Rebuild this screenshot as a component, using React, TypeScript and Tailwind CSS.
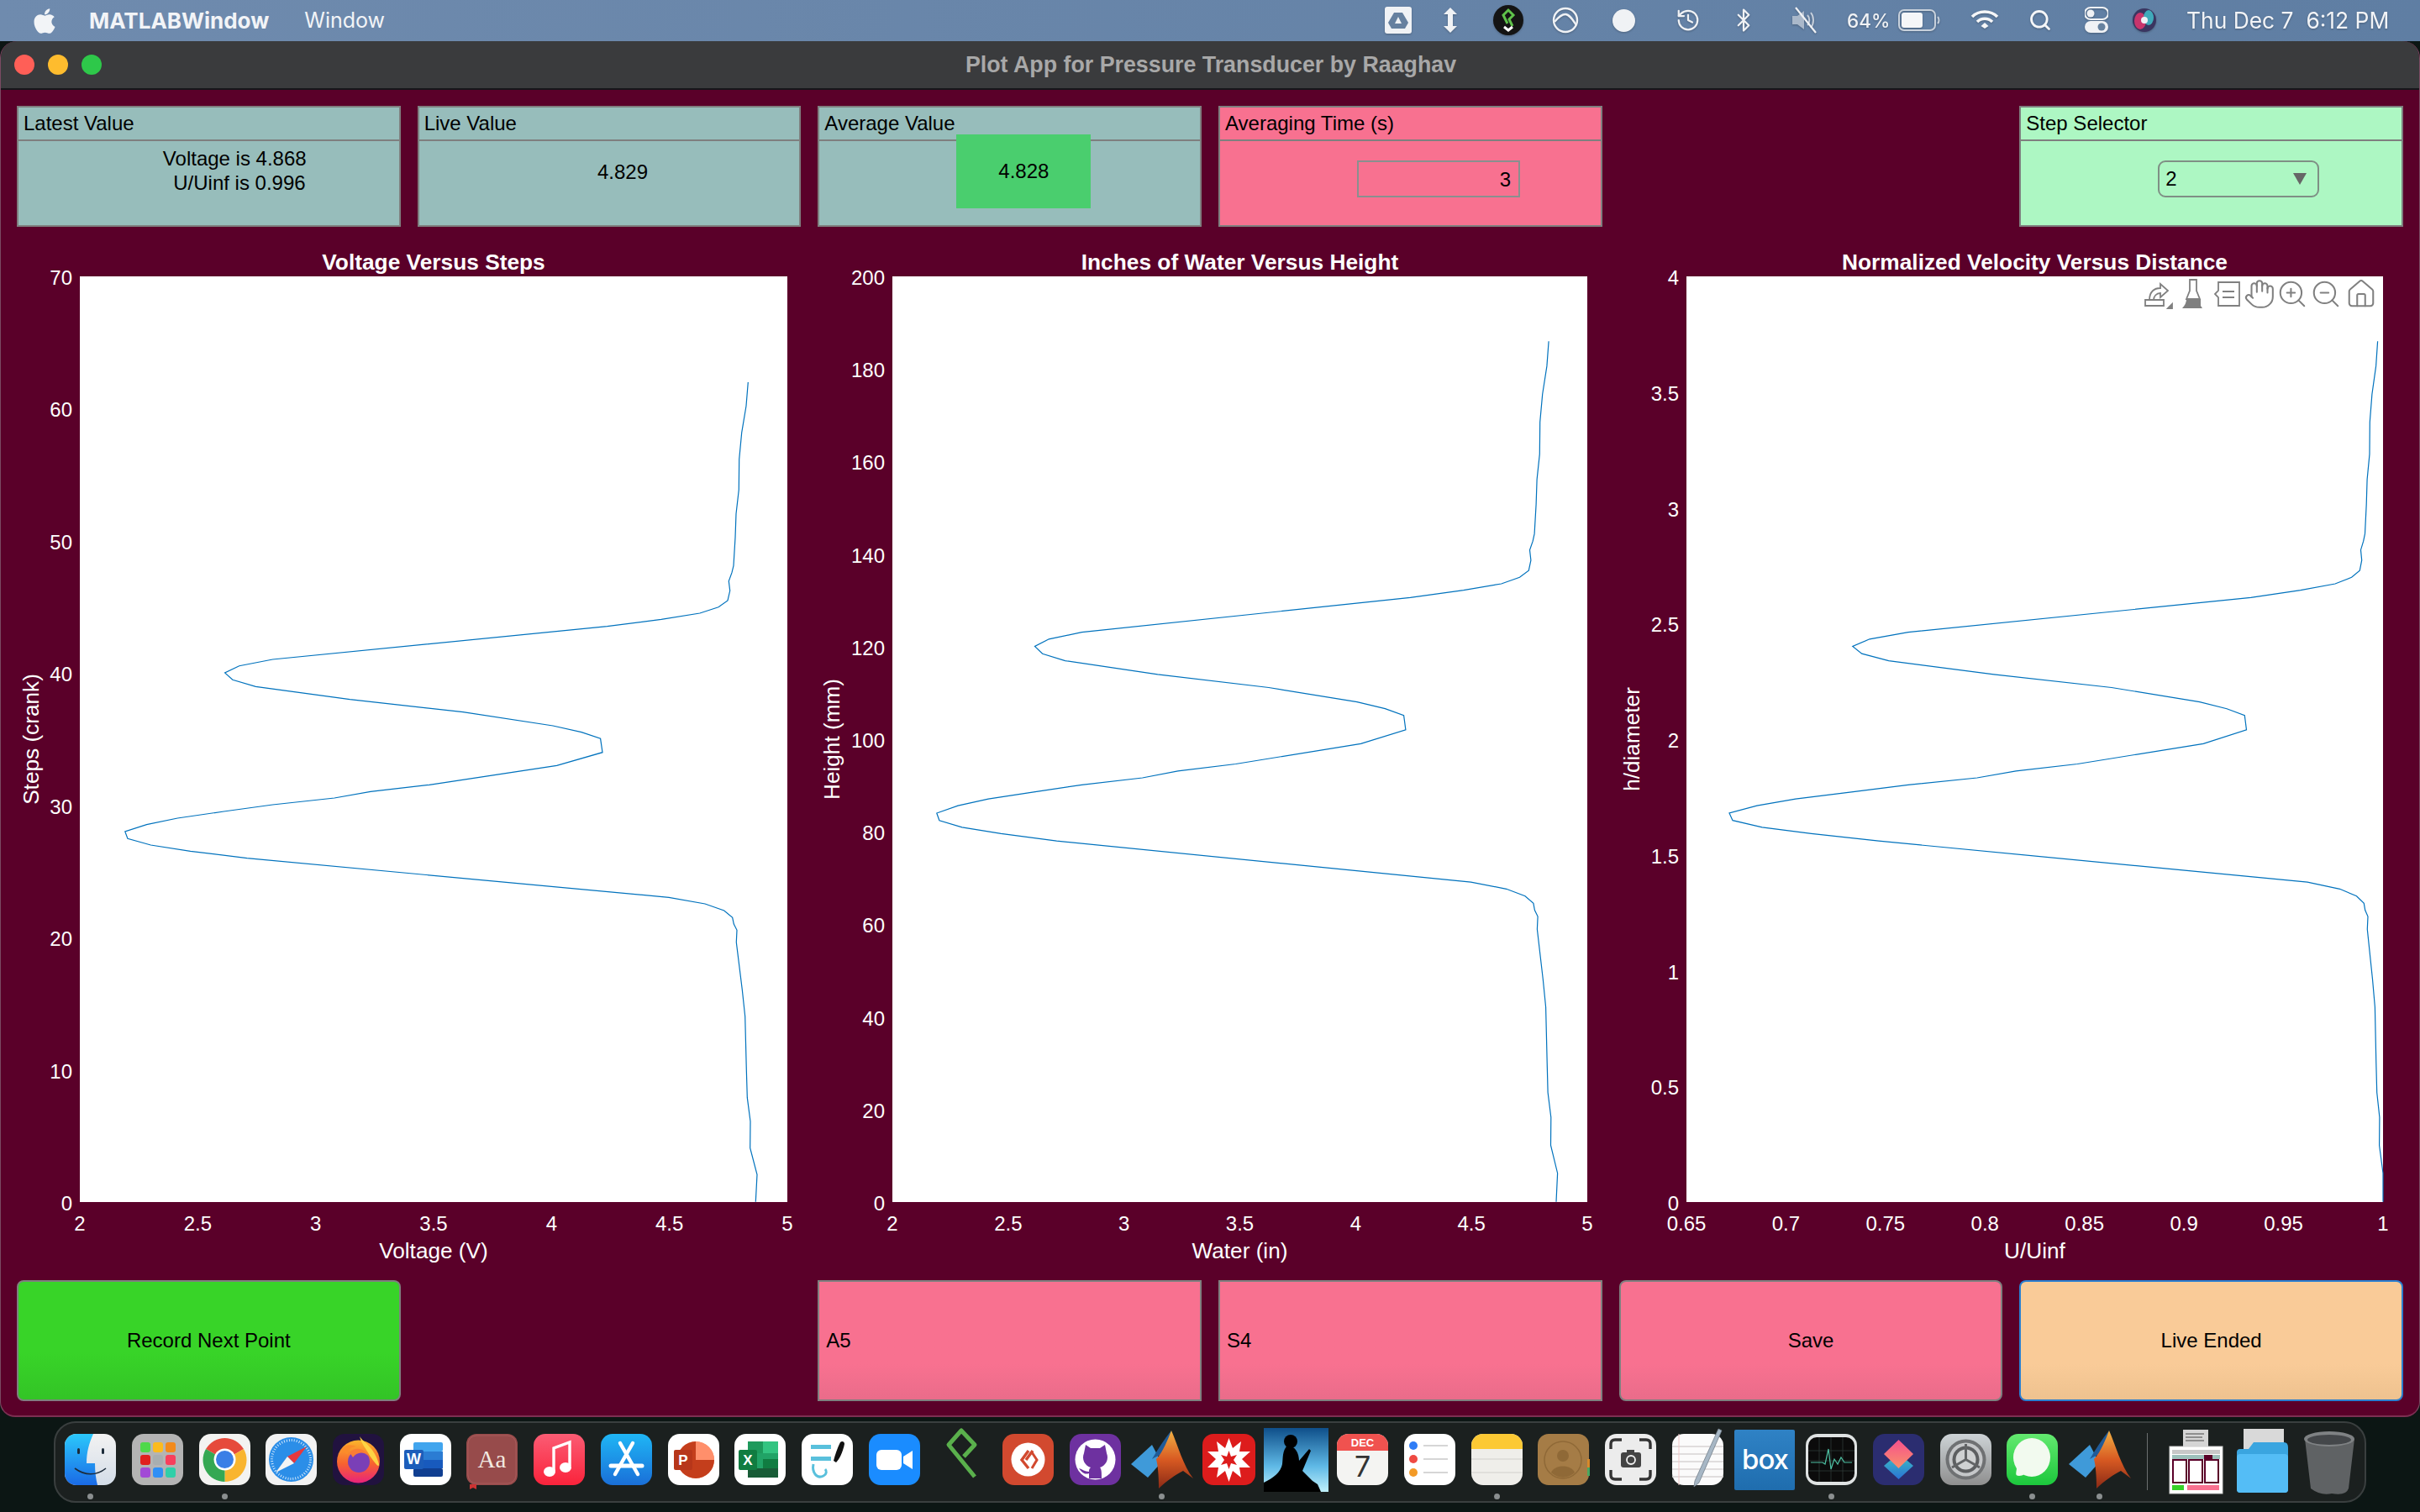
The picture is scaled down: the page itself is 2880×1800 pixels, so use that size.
import React from "react";
import { FaApple } from "react-icons/fa";
import { Hand, ZoomIn, ZoomOut, Home, History, Bluetooth, Search } from "lucide-react";

const raw: number[][] = [
  [890.3,455],[888,483.3],[882.7,515],[879.7,546.7],[879.3,583],[876,611.7],[875,640],[873,673.3],[871,681.7],[867.3,691.7],[868.7,703.3],[866,715],[855,722.7],[832.8,730],[787,737.3],[722.6,745.7],[324.5,785],[284.7,792.7],[267.6,801],[276.8,809.3],[304.3,817.3],[416.4,832.7],[551,847.7],[658,864],[692,871.7],[714.6,879.3],[717,895.7],[662.6,911.3],[511,934.3],[441,942.3],[398,950],[324.5,958],[266.4,966],[211.3,974],[174.5,981.7],[148.8,990],[151.9,998.3],[179.4,1006],[226.6,1013.3],[294,1021.7],[796,1068.3],[839,1076],[861.7,1084],[871.7,1092.3],[873.3,1100],[877,1107.3],[876.3,1121.7],[883.3,1178.3],[886.7,1210],[888.3,1273.3],[889.3,1306.7],[893,1335],[892.7,1366.7],[901,1398.3],[899.3,1430.7],
];
const data = raw.map(([x, y]) => ({ v: 2 + ((x - 95) / 842) * 3, s: (1431 - y) / 15.743 }));

type Frac = (d: { v: number; s: number }) => [number, number];
const PLOT_T = 39;
const PLOT_B = 1141;

function Chart(props: {
  w: number; left: number; right: number; title: string; xlabel: string; ylabel: string; ylabelX: number;
  xt: string[]; yt: string[]; map: Frac; xPos: (i: number) => number; children?: React.ReactNode; className: string;
}) {
  const { w, left, right, map } = props;
  const pw = right - left;
  const ph = PLOT_B - PLOT_T;
  const pts = data.map((d) => { const [fx, fy] = map(d); return `${(left + fx * pw).toFixed(1)},${(PLOT_T + fy * ph).toFixed(1)}`; }).join(" ");
  const cx = (left + right) / 2;
  return (
    <svg width={w} height={1224} className={props.className}>
      <text x={cx} y={31} textAnchor="middle" fontWeight={700} fontSize={26.3} fill="#fff">{props.title}</text>
      <rect x={left} y={PLOT_T} width={pw} height={ph} fill="#fff" />
      <polyline points={pts} fill="none" stroke="#0072bd" strokeWidth={1.2} />
      {props.yt.map((t, i) => (
        <text key={t} x={left - 9} y={PLOT_B - (i / (props.yt.length - 1)) * ph + 10} textAnchor="end" fontSize={24} fill="#fff">{t}</text>
      ))}
      {props.xt.map((t, i) => (
        <text key={t} x={left + props.xPos(i) * pw} y={1175} textAnchor="middle" fontSize={24} fill="#fff">{t}</text>
      ))}
      <text x={cx} y={1208} textAnchor="middle" fontSize={26.2} fill="#fff">{props.xlabel}</text>
      <text transform={`translate(${props.ylabelX},${(PLOT_T + PLOT_B) / 2}) rotate(-90)`} textAnchor="middle" fontSize={26.2} fill="#fff">{props.ylabel}</text>
      {props.children}
    </svg>
  );
}

function Toolbar() {
  const g = "#808080";
  const O = 1911;
  const at = (x: number) => `translate(${x - O},60)`;
  return (
    <g>
      <g transform={at(2568)} fill="none" stroke={g} strokeWidth={1.8}>
        <path d="M-15 7H7V14H-15Z" />
        <path d="M-10 7C-10 -3 -4 -7 3 -7L3 -12L12 -4L3 4L3 -1C-2 -1 -5 3 -5 7" />
        <path d="M12 17L17 12V17Z" fill={g} />
      </g>
      <g transform={at(2610)} fill="none" stroke={g} strokeWidth={1.8}>
        <path d="M-4 -17H4V-4L8 6H-8L-4 -4Z" />
        <path d="M-8 6H9V14L11 17H-13C-10 14 -8 10 -8 6Z" fill={g} stroke="none" />
      </g>
      <g transform={at(2650)} fill="none" stroke={g} strokeWidth={1.8}>
        <path d="M-10 -14H15V14H-10V4L-14 0L-10 -4Z" />
        <path d="M-5 -3H9M-5 4H9" strokeWidth={2} />
      </g>
      <Hand x={2689 - O - 19} y={41} width={38} height={38} stroke={g} strokeWidth={1.3} />
      <ZoomIn x={2728 - O - 19} y={41} width={38} height={38} stroke={g} strokeWidth={1.3} />
      <ZoomOut x={2768 - O - 19} y={41} width={38} height={38} stroke={g} strokeWidth={1.3} />
      <Home x={2810 - O - 19} y={41} width={38} height={38} stroke={g} strokeWidth={1.3} />
    </g>
  );
}

function Panel({ title, className, children }: { title: string; className: string; children?: React.ReactNode }) {
  return (
    <div className={`relative flex h-[144px] flex-col border-2 border-[#7f7f7f] text-[24px] text-black ${className}`}>
      <div className="flex h-[40px] items-center border-b-2 border-[#7f7f7f] pl-[6px]">{title}</div>
      <div className="flex flex-1">{children}</div>
    </div>
  );
}

/* ---------- menu bar icons ---------- */
const Ic = ({ w, children }: { w: string; children: React.ReactNode }) => (
  <div className={`flex shrink-0 items-center justify-center ${w}`}>{children}</div>
);

function StatusIcons() {
  return (
    <div className="flex items-center drop-shadow-[0_1px_1px_rgba(0,0,0,0.25)]">
      <Ic w="w-[33px] mr-[34px]">
        <svg width="32" height="32" viewBox="0 0 32 32"><rect width="32" height="32" rx="3" fill="#f0f2f5" /><path d="M11 7H21L28 19L24 26H8L4 19Z" fill="#66809f" /><path d="M16 12L20 20H12Z" fill="#f0f2f5" /></svg>
      </Ic>
      <Ic w="w-[24px] mr-[38px]">
        <svg width="20" height="32" viewBox="0 0 20 32" fill="#f0f2f5"><path d="M10 1L18 9H13V23H18L10 31L2 23H7V9H2Z" /></svg>
      </Ic>
      <Ic w="w-[38px] mr-[33px]">
        <svg width="36" height="36" viewBox="0 0 36 36"><circle cx="18" cy="18" r="18" fill="#141414" /><path d="M17 22L12 12L18 6L24 12L19 17L23 25" fill="none" stroke="#5fc24a" strokeWidth="3" /><path d="M13 26L18 30L23 26" fill="none" stroke="#fff" strokeWidth="3" /></svg>
      </Ic>
      <Ic w="w-[32px] mr-[39px]">
        <svg width="32" height="32" viewBox="0 0 32 32" fill="none" stroke="#f0f2f5" strokeWidth="2.4"><circle cx="16" cy="16" r="14" /><path d="M3 18C8 12 12 9 16 9C21 9 25 16 29 22" /></svg>
      </Ic>
      <Ic w="w-[28px] mr-[48px]">
        <svg width="27" height="27" viewBox="0 0 27 27"><circle cx="13.5" cy="13.5" r="13.5" fill="#f0f2f5" /></svg>
      </Ic>
      <Ic w="w-[30px] mr-[36px]"><History size={30} color="#f0f2f5" strokeWidth={1.8} /></Ic>
      <Ic w="w-[30px] mr-[41px]"><Bluetooth size={32} color="#f0f2f5" strokeWidth={1.8} /></Ic>
      <Ic w="w-[34px] mr-[33px]">
        <svg width="34" height="34" viewBox="0 0 34 34"><path d="M2 12H8L16 6V28L8 22H2Z" fill="#aab8ca" /><path d="M20 11C23 14 23 20 20 23M24 8C28 13 28 21 24 26" fill="none" stroke="#c4cedb" strokeWidth="2" /><path d="M6 2L30 32" stroke="#f0f2f5" strokeWidth="2.2" /></svg>
      </Ic>
      <span className="w-[58px] font-['Inter',sans-serif] text-[22.5px] font-medium text-[#f0f2f5]">64%</span>
      <Ic w="w-[50px] ml-[3px] mr-[36px]">
        <svg width="50" height="26" viewBox="0 0 50 26"><rect x="1" y="1" width="43" height="24" rx="6" fill="none" stroke="#c8d1dc" strokeWidth="2" /><rect x="4" y="4" width="25" height="18" rx="3" fill="#f5f6f8" /><path d="M47 9C49 11 49 15 47 17" fill="none" stroke="#c8d1dc" strokeWidth="2" /></svg>
      </Ic>
      <Ic w="w-[34px] mr-[35px]">
        <svg width="34" height="28" viewBox="0 0 34 28" fill="none" stroke="#f5f6f8" strokeWidth="3.6"><path d="M2 10C10 2 24 2 32 10" /><path d="M8 16C13 11 21 11 26 16" /><path d="M17 21L21.5 25L17 28L12.5 25Z" fill="#f5f6f8" stroke="none" transform="translate(0,-4)" /></svg>
      </Ic>
      <Ic w="w-[28px] mr-[39px]"><Search size={30} color="#f5f6f8" strokeWidth={2.4} /></Ic>
      <Ic w="w-[28px] mr-[29px]">
        <svg width="28" height="32" viewBox="0 0 28 32"><rect y="1" width="28" height="14" rx="7" fill="none" stroke="#f0f2f5" strokeWidth="2" /><circle cx="7" cy="8" r="4.5" fill="#f0f2f5" /><rect y="17" width="28" height="14" rx="7" fill="#f0f2f5" /><circle cx="20" cy="24" r="4.5" fill="#67829f" /></svg>
      </Ic>
      <Ic w="w-[28px] mr-[36px]">
        <svg width="28" height="28" viewBox="0 0 28 28">
          <circle cx="14" cy="14" r="14" fill="#3a3560" />
          <ellipse cx="9" cy="15" rx="7" ry="10" fill="#d8356e" opacity="0.9" />
          <ellipse cx="19" cy="11" rx="6" ry="9" fill="#41b7c4" opacity="0.9" />
          <circle cx="14" cy="14" r="4" fill="#f0f0f5" />
        </svg>
      </Ic>
      <span className="w-[278px] whitespace-pre font-['Inter',sans-serif] text-[26.4px] text-[#f2f4f7]">Thu Dec 7  6:12 PM</span>
    </div>
  );
}

/* ---------- dock icons ---------- */
const S = ({ children }: { children: React.ReactNode }) => (
  <svg width="61" height="61" viewBox="0 0 61 61" className="overflow-visible">{children}</svg>
);
const R = ({ f }: { f: string }) => <rect width="61" height="61" rx="14" fill={f} />;

const Matlab = ({ id }: { id: string }) => (
  <S>
    <defs><linearGradient id={id} x1="0" y1="0" x2="0" y2="1"><stop offset="0" stopColor="#f2b144" /><stop offset="0.5" stopColor="#d85a22" /><stop offset="1" stopColor="#8a2a16" /></linearGradient></defs>
    <path d="M-6 36L19 13L30 34L14 52Z" fill="#3f9ad9" />
    <path d="M42 -4C34 6 26 18 19 30C26 26 30 24 33 26Z" fill="#205b98" />
    <path d={"M42 -4C50 14 56 38 68 53L56 44C48 48 36 56 27 65C27 50 26 38 24 30C32 22 38 6 42 -4Z"} fill={`url(#${id})`} />
  </S>
);

const dockIcons: { el: React.ReactNode; dot?: boolean }[] = [
  { dot: true, el: <S><defs><linearGradient id="fb" x1="0" y1="0" x2="0" y2="1"><stop offset="0" stopColor="#2bc8fb" /><stop offset="1" stopColor="#1a6ae6" /></linearGradient><linearGradient id="fw" x1="0" y1="0" x2="0" y2="1"><stop offset="0" stopColor="#f2f2f2" /><stop offset="1" stopColor="#d4dde8" /></linearGradient></defs><R f="url(#fw)" /><path d="M14 0H34C29 11 26 22 26 35H36C36 45 37 53 39 61H14A14 14 0 0 1 0 47V14A14 14 0 0 1 14 0Z" fill="url(#fb)" /><rect x="15" y="17" width="3" height="7" rx="1.5" fill="#1c2b3a" /><rect x="44" y="17" width="3" height="7" rx="1.5" fill="#1c2b3a" /><path d="M12 41C24 50 38 50 49 41" fill="none" stroke="#1c2b3a" strokeWidth="1.6" /></S> },
  { el: <S><R f="#b4b4b4" />{["#4fd94b","#fcbb1e","#f28a1c","#e0201f","#a8aeb0","#f83f5c","#a24bd6","#2f8ff5","#2fcfa8"].map((c,i)=><rect key={c} x={10+(i%3)*15} y={10+Math.floor(i/3)*15} width="12" height="12" rx="3" fill={c} />)}</S> },
  { dot: true, el: <S><R f="#f3f3f1" /><path d="M30.5 31L8 18A26 26 0 0 1 53 18Z" fill="#e64a3b" /><path d="M30.5 31L53 18A26 26 0 0 1 30.5 57Z" fill="#f9b52f" /><path d="M30.5 31L30.5 57A26 26 0 0 1 8 18Z" fill="#35a853" /><circle cx="30.5" cy="30.5" r="13" fill="#fff" /><circle cx="30.5" cy="30.5" r="10.5" fill="#3b7fe6" /></S> },
  { el: <S><R f="#f2f2f2" /><circle cx="30.5" cy="30.5" r="26.5" fill="#2b8ee8" /><circle cx="30.5" cy="30.5" r="23" fill="none" stroke="#cfe6fb" strokeWidth="3" strokeDasharray="1 2" /><path d="M49 15L26 27L34 35Z" fill="#e8383d" /><path d="M12 46L26 27L34 35Z" fill="#f4f4f4" /></S> },
  { el: <S><defs><linearGradient id="ff" x1="0" y1="0" x2="0" y2="1"><stop offset="0" stopColor="#fbb52c" /><stop offset="0.55" stopColor="#f8622f" /><stop offset="1" stopColor="#e9227c" /></linearGradient></defs><R f="#21123f" /><circle cx="30.5" cy="33" r="25.5" fill="url(#ff)" /><path d="M32 3C36 10 50 16 55 36C55 42 50 34 44 26C40 18 34 12 32 3Z" fill="#fdd444" /><path d="M10 20C14 12 22 12 28 15C22 15 18 19 18 25Z" fill="#fb8c2a" /><circle cx="31" cy="33" r="13" fill="#7a3fb7" /><path d="M20 22C28 14 38 18 42 26C36 20 28 22 24 28Z" fill="#fa7d34" /></S> },
  { el: <S><R f="#fff" /><rect x="16" y="10" width="35" height="11" rx="2" fill="#41a5ee" /><rect x="16" y="21" width="35" height="10" fill="#2b7cd3" /><rect x="16" y="31" width="35" height="10" fill="#185abd" /><rect x="16" y="41" width="35" height="10" rx="2" fill="#103f91" /><rect x="5" y="19" width="23" height="23" rx="2" fill="#1c5dba" /><text x="16.5" y="36" textAnchor="middle" fontSize="18" fontWeight="700" fill="#fff">W</text></S> },
  { el: <S><rect width="61" height="61" rx="12" fill="#974b4b" /><rect x="2" y="2" width="57" height="57" rx="10" fill="none" stroke="#a85b5b" strokeWidth="1" /><text x="30.5" y="40" textAnchor="middle" fontSize="29" fontFamily="Liberation Serif, serif" fill="#f2e9e0">Aa</text><path d="M4 60H12V66L8 64L4 66Z" fill="#c33" /></S> },
  { el: <S><defs><linearGradient id="mu" x1="0" y1="0" x2="0" y2="1"><stop offset="0" stopColor="#fb5c74" /><stop offset="1" stopColor="#fa233b" /></linearGradient></defs><R f="url(#mu)" /><path d="M24 44V17L43 10V38" fill="none" stroke="#fff" strokeWidth="3.4" /><ellipse cx="19" cy="45" rx="7" ry="6" fill="#fff" /><ellipse cx="38" cy="40" rx="7" ry="6" fill="#fff" /></S> },
  { el: <S><defs><linearGradient id="as" x1="0" y1="0" x2="0" y2="1"><stop offset="0" stopColor="#1fb6f5" /><stop offset="1" stopColor="#1a6fd8" /></linearGradient></defs><R f="url(#as)" /><path d="M23 11L44 48M38 11L17 48" stroke="#fff" strokeWidth="4.4" strokeLinecap="round" /><path d="M12 38H49" stroke="#fff" strokeWidth="5" strokeLinecap="round" /></S> },
  { el: <S><R f="#fff" /><circle cx="33" cy="31" r="22" fill="#ff8f6b" /><path d="M33 31V9A22 22 0 0 0 33 53A22 22 0 0 0 55 31Z" fill="#c43e1c" /><path d="M33 9A22 22 0 0 1 55 31H33Z" fill="#ff8f6b" /><rect x="7" y="19" width="22" height="24" rx="2" fill="#b7361a" /><text x="18" y="37" textAnchor="middle" fontSize="17" fontWeight="700" fill="#fff">P</text></S> },
  { el: <S><R f="#fff" /><rect x="16" y="9" width="36" height="43" rx="2" fill="#21a366" /><rect x="16" y="9" width="18" height="14" fill="#1e9a5c" /><rect x="34" y="9" width="18" height="14" fill="#33c481" /><rect x="34" y="30" width="18" height="11" fill="#107c41" /><rect x="16" y="41" width="36" height="11" fill="#185c37" /><rect x="5" y="19" width="22" height="24" rx="2" fill="#107c41" /><text x="16" y="37" textAnchor="middle" fontSize="17" fontWeight="700" fill="#fff">X</text></S> },
  { el: <S><R f="#fff" /><rect x="11" y="13" width="24" height="5" fill="#59c0dc" /><rect x="11" y="27" width="24" height="5" fill="#59c0dc" /><path d="M46 10C48 8 51 9 51 12C49 22 45 30 41 34L38 32C40 24 43 16 46 10Z" fill="#111" /><path d="M14 36C12 46 18 54 26 50C30 48 30 44 28 42" fill="none" stroke="#59c0dc" strokeWidth="3" /></S> },
  { el: <S><R f="#1a8cff" /><rect x="9" y="19" width="30" height="24" rx="6" fill="#fff" /><path d="M41 27L52 20V42L41 35Z" fill="#fff" /></S> },
  { el: <S><path d="M34 27L47 13L31 -4L16 13L47 51" fill="none" stroke="#5ab04c" strokeWidth="5" strokeLinejoin="round" /></S> },
  { el: <S><R f="#d2492f" /><circle cx="30.5" cy="30.5" r="20" fill="#fff" /><path d="M31 20L23 31L31 41M36 20L28 31" fill="none" stroke="#d2492f" strokeWidth="3.4" /><path d="M35 41L41 31L35 22" fill="none" stroke="#d2492f" strokeWidth="3" /></S> },
  { el: <S><R f="#6e31a0" /><circle cx="30.5" cy="30.5" r="24" fill="#fff" /><path d="M19 13L25 17H36L42 13L44 23C47 30 43 38 36 40C38 42 38 46 38 53H23V47C17 49 14 45 11 41C15 42 18 45 23 45C23 43 23 42 25 40C18 38 14 30 17 23Z" fill="#6e31a0" /></S> },
  { dot: true, el: <Matlab id="ml" /> },
  { el: <S><rect x="-1" width="63" height="61" rx="13" fill="#dd1c1c" /><polygon points="30.5,5 35,17 45,9 43,21 56,21 46,30 56,40 43,40 45,52 35,44 30.5,57 26,44 16,52 18,40 5,40 15,30 5,21 18,21 16,9 26,17" fill="#fff" /><polygon points="30.5,20 33,27 40,25 36,31 40,37 33,35 30.5,42 28,35 21,37 25,31 21,25 28,27" fill="#dd1c1c" /></S> },
  { el: <S><defs><linearGradient id="kd" x1="0" y1="0" x2="0" y2="1"><stop offset="0" stopColor="#0f4f8a" /><stop offset="0.6" stopColor="#5fb9e6" /><stop offset="1" stopColor="#bff0fb" /></linearGradient></defs><rect x="-8" y="-7" width="77" height="76" fill="url(#kd)" /><circle cx="24" cy="9" r="8" fill="#000" /><path d="M20 14C30 14 34 24 34 32L46 18L48 20L38 44L50 56L56 60L60 69H-8V58C4 52 12 46 14 36C15 28 14 20 20 14Z" fill="#000" /></S> },
  { el: <S><R f="#f4f4f2" /><path d="M0 20V14A14 14 0 0 1 14 0H47A14 14 0 0 1 61 14V20Z" fill="#f0524f" /><text x="30.5" y="15" textAnchor="middle" fontSize="13" fontWeight="700" fill="#fff">DEC</text><text x="30.5" y="51" textAnchor="middle" fontSize="34" fontFamily="Inter, sans-serif" fill="#333">7</text></S> },
  { el: <S><R f="#fff" /><circle cx="11" cy="14" r="5" fill="#2f7df6" /><circle cx="11" cy="30" r="5" fill="#ef4a43" /><circle cx="11" cy="46" r="5" fill="#f39a26" /><path d="M23 14H52M23 30H52M23 46H52" stroke="#c9c9c9" strokeWidth="1.6" /></S> },
  { dot: true, el: <S><R f="#efeeea" /><path d="M0 18V14A14 14 0 0 1 14 0H47A14 14 0 0 1 61 14V18Z" fill="#fcc934" /><path d="M0 30H61M0 46H61" stroke="#dbdad6" strokeWidth="1.5" /></S> },
  { el: <S><rect width="61" height="61" rx="13" fill="#a57c46" /><circle cx="30" cy="31" r="22" fill="none" stroke="#8f6937" strokeWidth="1.5" /><circle cx="30" cy="26" r="7" fill="#8f6937" /><path d="M16 46C20 36 40 36 44 46A20 20 0 0 1 16 46Z" fill="#8f6937" /><rect x="59" y="30" width="3" height="10" fill="#d8892a" /><rect x="59" y="40" width="3" height="10" fill="#4aa860" /></S> },
  { el: <S><R f="#ececec" /><path d="M7 18V12Q7 7 12 7H20M41 7H49Q54 7 54 12V18M54 43V49Q54 54 49 54H41M20 54H12Q7 54 7 49V43" fill="none" stroke="#333" strokeWidth="3.4" /><rect x="19" y="22" width="24" height="18" rx="3" fill="#444" /><rect x="26" y="19" width="9" height="5" fill="#444" /><circle cx="31" cy="31" r="5" fill="none" stroke="#f2f2f2" strokeWidth="1.8" /></S> },
  { el: <S><R f="#fbfbfb" /><path d="M0 15H61M0 24H61M0 33H61M0 42H61M0 51H61" stroke="#d8d4d4" strokeWidth="1.5" /><path d="M8 0V61" stroke="#f0c8c8" strokeWidth="1" /><path d="M55 -6L59 -4L32 58L26 63L27 56Z" fill="#a7b7c5" stroke="#74808c" strokeWidth="0.8" /></S> },
  { el: <S><defs><linearGradient id="bx" x1="0" y1="0" x2="0" y2="1"><stop offset="0" stopColor="#2f82c5" /><stop offset="1" stopColor="#1f6dae" /></linearGradient></defs><rect x="-6" y="-5" width="72" height="72" rx="2" fill="url(#bx)" /><text x="30.5" y="42" textAnchor="middle" fontSize="33" fontFamily="Inter, sans-serif" letterSpacing="-1" fontWeight="500" fill="#fff">box</text></S> },
  { dot: true, el: <S><R f="#dfe3e3" /><rect x="3" y="4" width="55" height="53" rx="10" fill="#0b0b0b" /><path d="M3 20H58M3 32H58M3 44H58M16 4V57M30 4V57M44 4V57" stroke="#2d3a37" strokeWidth="0.8" /><path d="M6 34H20L23 36L27 18L30 42L34 30L38 36L42 28L46 34H55" fill="none" stroke="#4ec2a4" strokeWidth="1.2" /></S> },
  { el: <S><defs><linearGradient id="sa" x1="0" y1="0" x2="0" y2="1"><stop offset="0" stopColor="#f7508d" /><stop offset="1" stopColor="#f9906a" /></linearGradient><linearGradient id="sb" x1="0" y1="0" x2="0" y2="1"><stop offset="0" stopColor="#3ec4c0" /><stop offset="1" stopColor="#2a72d6" /></linearGradient></defs><R f="#2b2d70" /><path d="M30.5 23L48 38L30.5 54L13 38Z" fill="url(#sb)" /><path d="M30.5 7L48 24L30.5 41L13 24Z" fill="url(#sa)" /></S> },
  { el: <S><defs><linearGradient id="sp" x1="0" y1="0" x2="0" y2="1"><stop offset="0" stopColor="#cdd3d6" /><stop offset="1" stopColor="#8f8f8f" /></linearGradient></defs><R f="url(#sp)" /><circle cx="30.5" cy="30.5" r="24" fill="#6f7173" /><circle cx="30.5" cy="30.5" r="20" fill="#c5c7c9" /><circle cx="30.5" cy="30.5" r="16" fill="#5d5f61" /><circle cx="30.5" cy="30.5" r="12" fill="#cfd1d2" /><path d="M30.5 30.5V12M30.5 30.5L47 40M30.5 30.5L14 40" stroke="#626466" strokeWidth="3" /></S> },
  { dot: true, el: <S><defs><linearGradient id="ms" x1="0" y1="0" x2="0" y2="1"><stop offset="0" stopColor="#63e96f" /><stop offset="1" stopColor="#1cc73c" /></linearGradient></defs><R f="url(#ms)" /><ellipse cx="30" cy="28" rx="22" ry="23" fill="#f2faef" /><path d="M12 40C12 46 9 50 15 50C20 50 22 47 24 45Z" fill="#f2faef" /></S> },
  { dot: true, el: <Matlab id="ml2" /> },
];

function DockApp({ el, dot }: { el: React.ReactNode; dot?: boolean }) {
  return (
    <div className="flex w-[79.7px] shrink-0 flex-col items-center pt-[13px]">
      {el}
      {dot ? <div className="mt-[10px] h-[7px] w-[7px] rounded-full bg-[#8b8f90]" /> : null}
    </div>
  );
}

function Dock() {
  return (
    <div className="mx-auto mt-[5px] flex h-[97px] w-[2752px] rounded-[26px] border-2 border-[#3a3f3f] bg-[#1b201f] pl-[2px]">
      {dockIcons.map((d, i) => <DockApp key={i} el={d.el} dot={d.dot} />)}
      <div className="flex w-[35px] shrink-0 justify-center pt-[12px]">
        <div className="h-[68px] w-[1px] bg-[#6b6f6f]" />
      </div>
      <DockApp el={<S>
        <rect x="15" y="-5" width="30" height="20" fill="#d5d5d5" />
        <path d="M18 0H40M18 4H38M18 8H40" stroke="#777" strokeWidth="1.5" />
        <rect x="-1" y="15" width="63" height="56" fill="#fff" stroke="#cfcfcf" />
        <rect x="2" y="19" width="57" height="5" fill="#c8c8c8" />
        <rect x="2" y="25" width="57" height="5" fill="#9dc0bb" />
        <rect x="40" y="25" width="10" height="5" fill="#5a0028" />
        <rect x="3" y="31" width="16" height="27" fill="#fff" stroke="#5a0028" strokeWidth="2" />
        <rect x="22" y="31" width="16" height="27" fill="#fff" stroke="#5a0028" strokeWidth="2" />
        <rect x="41" y="31" width="16" height="27" fill="#fff" stroke="#5a0028" strokeWidth="2" />
        <rect x="2" y="61" width="14" height="6" fill="#38d128" />
        <rect x="20" y="61" width="38" height="6" fill="#f87190" />
      </S>} />
      <DockApp el={<S>
        <path d="M8 -6H56V20H8Z" fill="#d9d9d9" />
        <path d="M0 22Q0 18 4 18H14L20 10H56Q61 10 61 16V66Q61 70 57 70H4Q0 70 0 66Z" fill="#3aa5e0" />
        <rect y="24" width="61" height="46" rx="4" fill="#54bdf6" />
      </S>} />
      <DockApp el={<S>
        <path d="M1 6L8 65Q20 74 33 71Q50 74 53 65L60 6Z" fill="#5f6264" />
        <ellipse cx="30" cy="6" rx="30" ry="9" fill="#7f8284" />
        <ellipse cx="30" cy="7" rx="26" ry="6" fill="#44474a" />
      </S>} />
    </div>
  );
}

const xV = ["2", "2.5", "3", "3.5", "4", "4.5", "5"];

export default function App() {
  return (
    <div className="flex h-[1800px] w-[2880px] flex-col overflow-hidden bg-[#0c1614] font-['Liberation_Sans',Arial,sans-serif]">
      <div className="flex h-[49px] shrink-0 items-center bg-gradient-to-r from-[#6f8bae] to-[#5f7ea3]">
        <FaApple className="ml-[36px] text-[#f2f4f7]" size={34} />
        <span className="ml-[36px] font-['Inter',sans-serif] text-[26px] font-bold text-[#f2f4f7]">MATLABWindow</span>
        <span className="ml-[42px] font-['Inter',sans-serif] text-[25px] text-[#f2f4f7]">Window</span>
        <div className="ml-auto"><StatusIcons /></div>
      </div>

      <div className="flex h-[1638px] shrink-0 flex-col overflow-hidden rounded-t-[20px] rounded-b-[18px] border-x border-b-2 border-x-[#7a4a62] border-b-[#7c2f52] bg-[#5a0029]">
        <div className="flex h-[58px] shrink-0 items-center border-b-2 border-[#16161a] bg-[#3a3b3d] pl-[16px]">
          <div className="h-[24px] w-[24px] shrink-0 rounded-full bg-[#ff5f57]" />
          <div className="ml-[16px] h-[24px] w-[24px] shrink-0 rounded-full bg-[#febc2e]" />
          <div className="ml-[16px] h-[24px] w-[24px] shrink-0 rounded-full bg-[#2ec84a]" />
          <div className="ml-[-118px] flex-1 pl-[0px] text-center text-[26.8px] font-bold text-[#a8a8a8]">Plot App for Pressure Transducer by Raaghav</div>
        </div>

        <div className="grid shrink-0 grid-cols-6 gap-x-[20px] px-[19px] pt-[19px]">
          <Panel title="Latest Value" className="bg-[#97bdbb]">
            <div className="w-full pr-[110px] pt-[6px] text-right leading-[29px]">
              <div>Voltage is 4.868</div>
              <div className="pr-[1px]">U/Uinf is 0.996</div>
            </div>
          </Panel>
          <Panel title="Live Value" className="bg-[#97bdbb]">
            <div className="flex w-full items-center justify-center pb-[27px] pl-[32px]">4.829</div>
          </Panel>
          <Panel title="Average Value" className="bg-[#97bdbb]">
            <div className="absolute left-[163px] top-[32px] flex h-[88px] w-[160px] items-center justify-center bg-[#4ace6e]">4.828</div>
          </Panel>
          <Panel title="Averaging Time (s)" className="bg-[#f87190]">
            <div className="ml-[163px] mt-[23px] flex h-[44px] w-[194px] items-center justify-end border-2 border-[#8a8f8f] pr-[9px] pt-[2px]">3</div>
          </Panel>
          <div />
          <Panel title="Step Selector" className="bg-[#adf7c3]">
            <div className="ml-[163px] mt-[23px] flex h-[44px] w-[192px] items-center justify-between rounded-[9px] border-2 border-[#7f8f85] px-[7px]">
              <span>2</span>
              <svg width="16" height="16" viewBox="0 0 16 16" className="mr-[6px]"><path d="M0 1H16L8 15Z" fill="#666" /></svg>
            </div>
          </Panel>
        </div>

        <div className="mt-[20px] flex h-[1224px] shrink-0">
          <Chart className="shrink-0" w={960} left={94} right={936} title="Voltage Versus Steps" xlabel="Voltage (V)" ylabel="Steps (crank)" ylabelX={45}
            xt={xV} yt={["0","10","20","30","40","50","60","70"]} xPos={(i) => i / 6}
            map={(d) => [(d.v - 2) / 3, 1 - d.s / 70]} />
          <Chart className="shrink-0" w={950} left={101} right={928} title="Inches of Water Versus Height" xlabel="Water (in)" ylabel="Height (mm)" ylabelX={38}
            xt={xV} yt={["0","20","40","60","80","100","120","140","160","180","200"]} xPos={(i) => i / 6}
            map={(d) => [(d.v - 2) / 3, 1 - (d.s * 3) / 200]} />
          <Chart className="shrink-0" w={968} left={96} right={925} title="Normalized Velocity Versus Distance" xlabel="U/Uinf" ylabel="h/diameter" ylabelX={40}
            xt={["0.65","0.7","0.75","0.8","0.85","0.9","0.95","1"]} yt={["0","0.5","1","1.5","2","2.5","3","3.5","4"]} xPos={(i) => i / 7}
            map={(d) => [(Math.min(1, Math.sqrt(d.v / 4.86)) - 0.65) / 0.35, 1 - (d.s * 0.06) / 4]}>
            <Toolbar />
          </Chart>
        </div>

        <div className="mt-[10px] grid h-[144px] shrink-0 grid-cols-6 gap-x-[20px] px-[19px] text-[24px] text-black">
          <div className="flex items-center justify-center rounded-[8px] border-2 border-[#7f7f7f] bg-gradient-to-b from-[#38d428] from-60% to-[#33c426]">Record Next Point</div>
          <div />
          <div className="flex items-center border-2 border-[#7f7f7f] bg-gradient-to-b from-[#f87190] from-70% to-[#ea6c8a] pl-[8px]">A5</div>
          <div className="flex items-center border-2 border-[#7f7f7f] bg-gradient-to-b from-[#f87190] from-70% to-[#ea6c8a] pl-[8px]">S4</div>
          <div className="flex items-center justify-center rounded-[8px] border-2 border-[#7f7f7f] bg-gradient-to-b from-[#f87190] from-70% to-[#ea6c8a]">Save</div>
          <div className="flex items-center justify-center rounded-[8px] border-2 border-[#2a7fd0] bg-gradient-to-b from-[#f9cb98] from-70% to-[#eec28f]">Live Ended</div>
        </div>
      </div>

      <Dock />
    </div>
  );
}
